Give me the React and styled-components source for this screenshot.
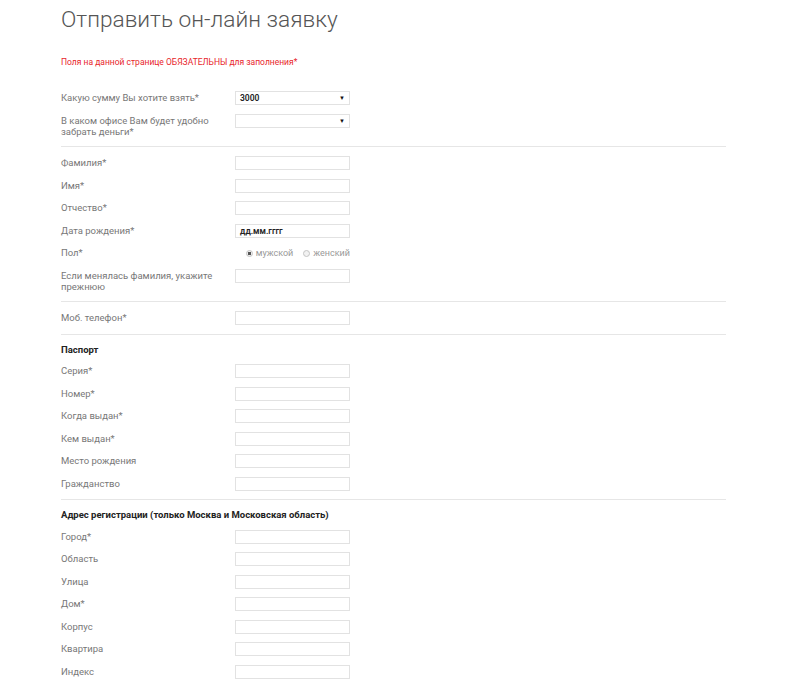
import React from "react";
import styled, { createGlobalStyle } from "styled-components";

const GlobalStyle = createGlobalStyle`
  html, body {
    margin: 0;
    padding: 0;
    background: #fff;
  }
  body {
    font-family: Roboto, "Liberation Sans", Arial, sans-serif;
  }
`;

const Page = styled.div`
  width: 665px;
  padding: 0 0 20px 61px;
`;

const Title = styled.h1`
  margin: 0;
  padding-top: 5px;
  font-size: 22.7px;
  line-height: 30px;
  font-weight: 300;
  color: #555;
`;

const Note = styled.p`
  margin: 21px 0 0;
  font-size: 8.5px;
  line-height: 12px;
  color: #e8262b;
`;

const Form = styled.div`
  margin-top: 23px;
`;

const Row = styled.div`
  display: grid;
  grid-template-columns: 174px 115px;
  align-items: start;
  margin-bottom: 8.5px;
`;

const Label = styled.div`
  font-size: 9.5px;
  line-height: 11.5px;
  padding-top: 1px;
  color: #777;
  width: 160px;
`;

const Field = styled.div`
  position: relative;
  box-sizing: border-box;
  height: 14px;
  border: 1px solid #e2e2e2;
  background: #fff;
  font-size: 8.5px;
  line-height: 12px;
  padding-left: 4px;
  color: #222;
  font-weight: ${(p) => (p.$bold ? 600 : 400)};
`;

const Arrow = styled.span`
  position: absolute;
  right: 4px;
  top: 0;
  font-size: 6px;
  line-height: 12px;
  color: #111;
`;

const Divider = styled.hr`
  margin: 1px 0 9px;
  border: 0;
  border-top: 1px solid #e6e6e6;
`;

const Heading = styled.div`
  font-size: 9.5px;
  line-height: 12px;
  font-weight: 700;
  color: #222;
  margin: 1.5px 0 8.6px;
`;

const Radios = styled.div`
  display: flex;
  justify-content: flex-end;
  align-items: center;
  gap: 10px;
  height: 14px;
  font-size: 9px;
  color: #999;
`;

const RadioItem = styled.label`
  display: flex;
  align-items: center;
  gap: 3px;
`;

const Circle = styled.span`
  box-sizing: border-box;
  width: 7px;
  height: 7px;
  border-radius: 50%;
  border: 1px solid #c4c4c4;
  background: ${(p) => (p.$checked ? "radial-gradient(circle, #555 0 1.6px, #eee 2px)" : "#f2f2f2")};
`;

function Select({ value }) {
  return (
    <Field $bold>
      {value}
      <Arrow>▼</Arrow>
    </Field>
  );
}

function TextRow({ label, value }) {
  return (
    <Row>
      <Label>{label}</Label>
      <Field $bold>{value}</Field>
    </Row>
  );
}

const personal = ["Фамилия*", "Имя*", "Отчество*"];
const passport = [
  "Серия*",
  "Номер*",
  "Когда выдан*",
  "Кем выдан*",
  "Место рождения",
  "Гражданство",
];
const address = ["Город*", "Область", "Улица", "Дом*", "Корпус", "Квартира", "Индекс"];

export default function App() {
  return (
    <Page>
      <GlobalStyle />
      <Title>Отправить он-лайн заявку</Title>
      <Note>Поля на данной странице ОБЯЗАТЕЛЬНЫ для заполнения*</Note>

      <Form>
        <Row>
          <Label>Какую сумму Вы хотите взять*</Label>
          <Select value="3000" />
        </Row>
        <Row>
          <Label>В каком офисе Вам будет удобно забрать деньги*</Label>
          <Select value="" />
        </Row>
        <Divider />

        {personal.map((l) => (
          <TextRow key={l} label={l} />
        ))}
        <TextRow label="Дата рождения*" value="дд.мм.гггг" />
        <Row>
          <Label>Пол*</Label>
          <Radios>
            <RadioItem>
              <Circle $checked />
              мужской
            </RadioItem>
            <RadioItem>
              <Circle />
              женский
            </RadioItem>
          </Radios>
        </Row>
        <TextRow label="Если менялась фамилия, укажите прежнюю" />
        <Divider />

        <TextRow label="Моб. телефон*" />
        <Divider />

        <Heading>Паспорт</Heading>
        {passport.map((l) => (
          <TextRow key={l} label={l} />
        ))}
        <Divider />

        <Heading>Адрес регистрации (только Москва и Московская область)</Heading>
        {address.map((l) => (
          <TextRow key={l} label={l} />
        ))}
      </Form>
    </Page>
  );
}
